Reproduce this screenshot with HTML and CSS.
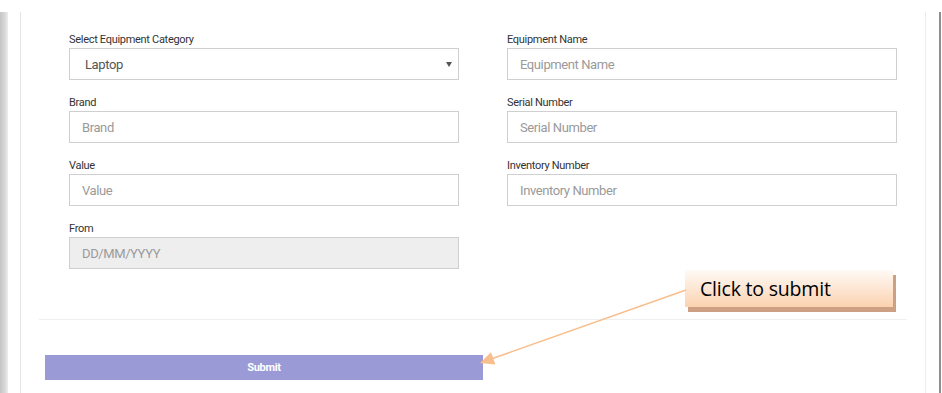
FILE: index.html
```html
<!DOCTYPE html>
<html lang="en">
<head>
  <meta charset="UTF-8" />
  <title>Add Equipment</title>
  <link rel="stylesheet" href="styles.css">
</head>
<body>

  <div class="edge-left"></div>

  <div class="page">

    <!-- Equipment form -->
    <div class="form-grid">
      <div class="form-group">
        <label class="label">Select Equipment Category</label>
        <div class="select-wrap">
          <select class="field select-field">
            <option>Laptop</option>
            <option>Desktop</option>
            <option>Monitor</option>
          </select>
        </div>
      </div>
      <div class="form-group">
        <label class="label">Equipment Name</label>
        <input type="text" class="field" placeholder="Equipment Name" />
      </div>

      <div class="form-group">
        <label class="label">Brand</label>
        <input type="text" class="field" placeholder="Brand" />
      </div>
      <div class="form-group">
        <label class="label">Serial Number</label>
        <input type="text" class="field" placeholder="Serial Number" />
      </div>

      <div class="form-group">
        <label class="label">Value</label>
        <input type="text" class="field" placeholder="Value" />
      </div>
      <div class="form-group">
        <label class="label">Inventory Number</label>
        <input type="text" class="field" placeholder="Inventory Number" />
      </div>

      <div class="form-group">
        <label class="label">From</label>
        <input type="text" class="field disabled" placeholder="DD/MM/YYYY" disabled />
      </div>
    </div>

    <div class="form-footer">
      <button class="btn-submit">Submit</button>
    </div>

  </div>

  <div class="edge-right"></div>

  <!-- Annotation -->
  <div class="callout">Click to submit</div>
  <svg class="pointer" width="942" height="393" viewBox="0 0 942 393">
    <line x1="686" y1="290" x2="491" y2="359" stroke="#f8bf8d" stroke-width="1.6" />
    <polygon points="480,363 495.4,364.4 491,352.2" fill="#f8bf8d" />
  </svg>

</body>
</html>
```

FILE: styles.css
```css
body {
  margin: 0;
  height: 393px;
  overflow: hidden;
  background: #fff;
  display: flex;
  align-items: stretch;
  font-family: Roboto, sans-serif;
}

.edge-left {
  width: 8px;
  margin-top: 12px;
  background: linear-gradient(to right, #c4c4c4, #d8d8d8 60%, #ededed);
}

.page {
  margin-top: 12px;
  margin-left: 12px;
  width: 904px;
  border-left: 1px solid #e4e4e4;
  border-right: 1px solid #ececec;
}

.edge-right {
  margin-top: 12px;
  margin-left: 13px;
  width: 2px;
  background: #8f8f8f;
}

.form-grid {
  display: grid;
  grid-template-columns: 390px 390px;
  column-gap: 48px;
  row-gap: 16px;
  padding: 21px 0 0 48px;
}

.label {
  display: block;
  font-size: 11px;
  line-height: 14px;
  letter-spacing: -0.3px;
  color: #333;
  margin-bottom: 1px;
}

.field {
  box-sizing: border-box;
  width: 100%;
  height: 32px;
  padding: 0 12px;
  border: 1px solid #cfcfcf;
  background: #fff;
  font-family: inherit;
  font-size: 13px;
  letter-spacing: -0.4px;
  color: #555;
  outline: none;
  border-radius: 0;
}

.field::placeholder {
  color: #9a9a9a;
}

.field.disabled {
  background: #eeeeee;
}

.select-wrap {
  position: relative;
}

.select-field {
  appearance: none;
  padding-left: 15px;
}

.select-wrap::after {
  content: "";
  position: absolute;
  right: 7px;
  top: 14px;
  border-left: 3px solid transparent;
  border-right: 3px solid transparent;
  border-top: 5px solid #555;
}

.form-footer {
  margin: 50px 18px 0 18px;
  border-top: 1px solid #f0f0f0;
  padding: 35px 0 0 6px;
}

.btn-submit {
  width: 438px;
  height: 25px;
  border: none;
  background: #9a9ad7;
  color: #fff;
  font-family: inherit;
  font-size: 11px;
  font-weight: bold;
  letter-spacing: -0.3px;
  cursor: pointer;
}

.callout {
  position: absolute;
  left: 685px;
  top: 270px;
  width: 193px;
  height: 37px;
  padding-left: 15px;
  box-shadow: 3px 5px 0 #cda083;
  background: linear-gradient(to bottom, #fffaf6, #fbd2b0);
  font-family: "Open Sans", sans-serif;
  font-size: 19.5px;
  line-height: 37px;
  letter-spacing: -0.2px;
  color: #000;
}

.pointer {
  position: absolute;
  left: 0;
  top: 0;
  pointer-events: none;
}
```
